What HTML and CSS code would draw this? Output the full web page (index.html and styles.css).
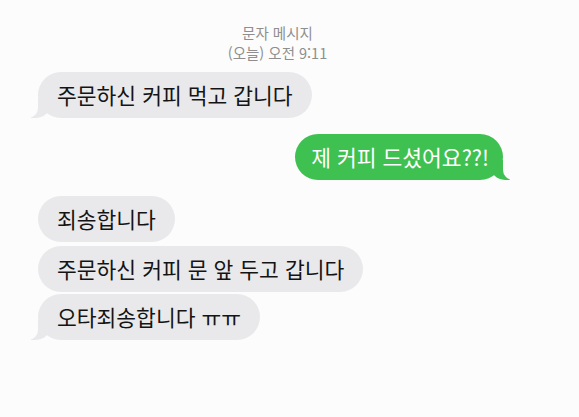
FILE: index.html
```html
<!DOCTYPE html>
<html lang="ko">
<head>
<meta charset="utf-8">
<link rel="stylesheet" href="styles.css">
</head>
<body>
<div class="thread">
  <div class="header">
    <div>문자 메시지</div>
    <div>(오늘) 오전 9:11</div>
  </div>
  <div class="msg in tail first">주문하신 커피 먹고 갑니다</div>
  <div class="msg out tail">제 커피 드셨어요??!</div>
  <div class="msg in group-start">죄송합니다</div>
  <div class="msg in">주문하신 커피 문 앞 두고 갑니다</div>
  <div class="msg in tail last">오타죄송합니다 ㅠㅠ</div>
</div>
</body>
</html>
```

FILE: styles.css
```css
html, body {
  margin: 0;
  padding: 0;
  background: #fcfcfc;
}

.thread {
  width: 579px;
  height: 417px;
  box-sizing: border-box;
  padding-top: 23px;
  display: flex;
  flex-direction: column;
  align-items: flex-start;
  font-family: "Noto Sans CJK KR", "Noto Sans", sans-serif;
}

.header {
  align-self: stretch;
  text-align: center;
  font-size: 14.5px;
  line-height: 20px;
  color: #8e8e8e;
  padding-right: 24px;
}

.msg {
  position: relative;
  font-size: 21.5px;
  line-height: 26px;
  padding: 10px 19px 10px 19px;
  border-radius: 23px;
  margin-top: 4px;
}

.in {
  background: #e9e9eb;
  color: #141414;
  margin-left: 38px;
}

.out {
  background: #3fc152;
  color: #ffffff;
  align-self: flex-end;
  margin-right: 76px;
  margin-top: 16px;
  padding: 10px 14px 10px 16px;
}

.first {
  margin-top: 9px;
}

.group-start {
  margin-top: 16px;
}

.last {
  margin-top: 2px;
}

.tail.in::before {
  content: "";
  position: absolute;
  bottom: 0;
  left: -7px;
  width: 20px;
  height: 20px;
  background: #e9e9eb;
  border-bottom-right-radius: 15px;
}

.tail.in::after {
  content: "";
  position: absolute;
  bottom: 0;
  left: -10px;
  width: 10px;
  height: 21px;
  background: #fcfcfc;
  border-bottom-right-radius: 10px;
}

.tail.out::before {
  content: "";
  position: absolute;
  bottom: 0;
  right: -7px;
  width: 20px;
  height: 20px;
  background: #3fc152;
  border-bottom-left-radius: 15px;
}

.tail.out::after {
  content: "";
  position: absolute;
  bottom: 0;
  right: -10px;
  width: 10px;
  height: 21px;
  background: #fcfcfc;
  border-bottom-left-radius: 10px;
}
```
